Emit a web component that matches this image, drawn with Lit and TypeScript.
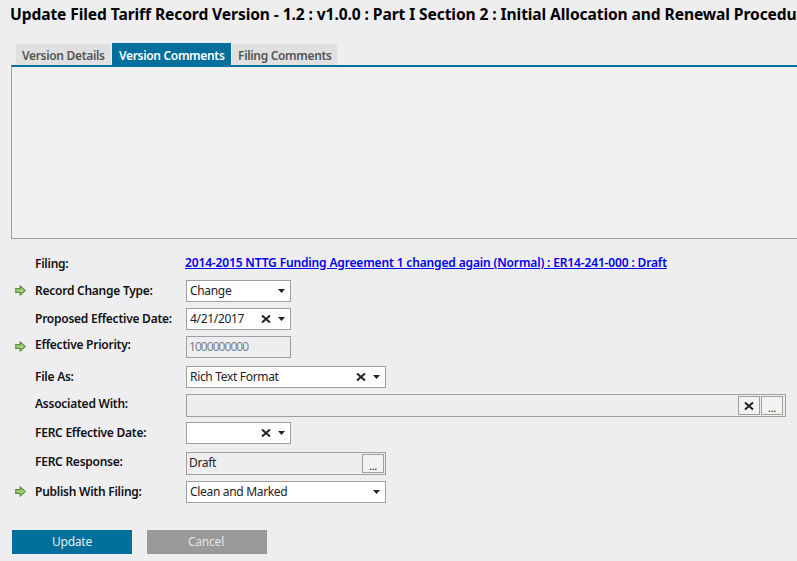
import { LitElement, html, css } from "lit";
import { customElement } from "lit/decorators.js";

const arrow = html`<svg class="arrow" width="11" height="11" viewBox="0 0 11 11"><path d="M.8 3.6H5.2V1L10.2 5.5 5.2 10V7.4H.8Z" fill="#a6cf7c" stroke="#5d8f3a" stroke-width="1.2"/></svg>`;
const xIcon = html`<svg class="x" width="10" height="10" viewBox="0 0 10 10"><path d="M1 1.5L9 8.5M9 1.5L1 8.5" stroke="#222" stroke-width="2" fill="none"/></svg>`;
const caret = html`<svg class="caret" width="7" height="4" viewBox="0 0 7 4"><path d="M0 0H7L3.5 4Z" fill="#222"/></svg>`;

@customElement("app-root")
export class AppRoot extends LitElement {
  static styles = css`
    :host {
      display: block;
      width: 797px;
      height: 561px;
      overflow: hidden;
      background: #eeeef0;
      font-family: "Noto Sans", "Open Sans", sans-serif;
      font-size: 12px;
      color: #111;
    }
    h1 {
      margin: 0;
      padding: 3px 0 0 10px;
      height: 41px;
      box-sizing: border-box;
      font-size: 15.6px;
      line-height: 22px;
      font-weight: 700;
      white-space: nowrap;
      color: #000;
      letter-spacing: -0.1px;
    }
    .tabs {
      display: flex;
      align-items: flex-end;
      height: 24px;
      margin-left: 16px;
    }
    .tab {
      height: 21px;
      line-height: 24px;
      font-weight: 600;
      font-size: 12px;
      letter-spacing: -0.32px;
      padding: 0 6px;
      background: #e0e0e0;
      color: #555;
      box-sizing: border-box;
      margin-right: 1px;
      white-space: nowrap;
    }
    .tab.on {
      height: 22px;
      line-height: 25px;
      background: #006f9c;
      color: #fff;
      padding-left: 7px;
    }
    .tab.v { width: 95px; }
    .tab.c { width: 119px; }
    .tab.f { width: 105px; margin-right: 0; }
    .panel {
      margin-left: 11px;
      width: 800px;
      height: 174px;
      border-top: 2px solid #006f9c;
      border-left: 1px solid #a0a0a0;
      border-bottom: 1px solid #a0a0a0;
      box-sizing: border-box;
      background: #f0f0f0;
      margin-bottom: 15px;
    }
    .form {
      display: grid;
      grid-template-columns: 35px 151px 1fr;
      grid-template-rows: 26px 28px 28px 30px 28px 28px 30px 29px 49px;
      align-items: start;
    }
    .mark { padding: 5px 0 0 15px; height: 16px; box-sizing: border-box; }
    .arrow { display: block; }
    label {
      font-weight: 600;
      font-size: 12px;
      letter-spacing: -0.25px;
      line-height: 16px;
      color: #111;
      white-space: nowrap;
    }
    a {
      display: block;
      font-weight: 600;
      font-size: 12px;
      letter-spacing: -0.15px;
      line-height: 16px;
      margin: 1px 0 0 -1px;
      color: #0000ee;
      text-decoration: underline;
      white-space: nowrap;
    }
    .t1 { margin-top: 1px; }
    .t2 { margin-top: 2px; }
    .t3 { margin-top: 3px; }
    .field {
      display: flex;
      align-items: center;
      box-sizing: border-box;
      height: 22px;
      border: 1px solid #a0a0a0;
      background: #fff;
      padding: 0 3px;
      font-size: 12px;
      line-height: 16px;
      letter-spacing: -0.32px;
      color: #222;
    }
    .s { width: 105px; }
    .w { width: 200px; }
    .wide { width: 600px; height: 23px; background: #eeeef0; padding: 0 2px 0 0; }
    .off { background: #eeeef0; padding-left: 2px; }
    .muted { color: #7a7f8c; letter-spacing: -0.95px; }
    .grow { flex: 1; white-space: nowrap; padding-bottom: 1px; }
    .x { margin-right: 7px; display: block; }
    .caret { margin-right: 2px; display: block; }
    .draft { height: 23px; background: #eeeef0; padding: 0 1px 0 2px; }
    .mini {
      box-sizing: border-box;
      width: 22px;
      height: 19px;
      border: 1px solid #a0a0a0;
      background: #f2f2f2;
      display: flex;
      align-items: center;
      justify-content: center;
      font-size: 11px;
      line-height: 1;
      padding-top: 3px;
      color: #111;
    }
    .mini + .mini { margin-left: 1px; }
    .mini .x { margin: -3px 0 0; }
    .actions {
      display: flex;
      gap: 15px;
      margin-left: 12px;
    }
    button {
      width: 120px;
      height: 24px;
      border: 0;
      padding: 0;
      font: inherit;
      font-size: 12px;
      line-height: 16px;
      letter-spacing: -0.2px;
      color: #e6eef2;
      background: #006f9c;
    }
    button.cancel { background: #999; color: #e4e4e4; padding-right: 2px; }
  `;

  render() {
    return html`
      <h1>Update Filed Tariff Record Version - 1.2 : v1.0.0 : Part I Section 2 : Initial Allocation and Renewal Procedures</h1>
      <div class="tabs">
        <div class="tab v">Version Details</div>
        <div class="tab on c">Version Comments</div>
        <div class="tab f">Filing Comments</div>
      </div>
      <div class="panel"></div>
      <div class="form">
        <span></span><label class="t2">Filing:</label>
        <a href="#">2014-2015 NTTG Funding Agreement 1 changed again (Normal) : ER14-241-000 : Draft</a>

        <span class="mark">${arrow}</span><label class="t3">Record Change Type:</label>
        <div class="field s"><span class="grow">Change</span>${caret}</div>

        <span></span><label class="t3">Proposed Effective Date:</label>
        <div class="field s"><span class="grow">4/21/2017</span>${xIcon}${caret}</div>

        <span class="mark">${arrow}</span><label class="t1">Effective Priority:</label>
        <div class="field s off"><span class="grow muted">1000000000</span></div>

        <span></span><label class="t3">File As:</label>
        <div class="field w"><span class="grow">Rich Text Format</span>${xIcon}${caret}</div>

        <span></span><label class="t2">Associated With:</label>
        <div class="field wide"><span class="grow"></span><span class="mini">${xIcon}</span><span class="mini">...</span></div>

        <span></span><label class="t3">FERC Effective Date:</label>
        <div class="field s"><span class="grow"></span>${xIcon}${caret}</div>

        <span></span><label class="t2">FERC Response:</label>
        <div class="field w draft"><span class="grow">Draft</span><span class="mini">...</span></div>

        <span class="mark">${arrow}</span><label class="t3">Publish With Filing:</label>
        <div class="field w"><span class="grow">Clean and Marked</span>${caret}</div>
      </div>
      <div class="actions">
        <button>Update</button>
        <button class="cancel">Cancel</button>
      </div>
    `;
  }
}
